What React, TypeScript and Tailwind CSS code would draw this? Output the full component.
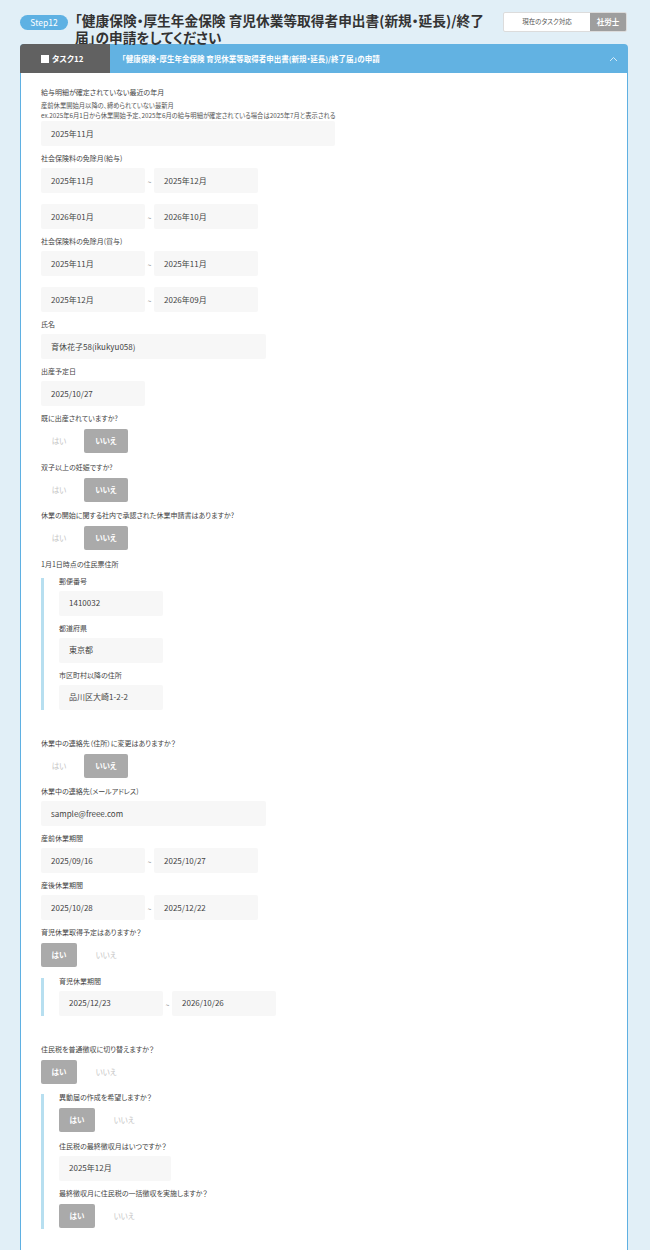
import React from "react";

type Opt = "yes" | "no";

function Label({ children }: { children: React.ReactNode }) {
  return <div className="text-[7px] leading-[10px] text-[#444] whitespace-nowrap">{children}</div>;
}

function Box({ value, w }: { value: string; w: string }) {
  return (
    <div className={`h-[25px] ${w} shrink-0 rounded-[2px] bg-[#f7f7f7] flex items-center pl-[10px] text-[8px] text-[#444]`}>
      {value}
    </div>
  );
}

function Range({ from, to }: { from: string; to: string }) {
  return (
    <div className="flex items-center">
      <Box value={from} w="w-[104px]" />
      <div className="w-[9px] text-center text-[7px] text-[#8a8a8a] pt-[4px]">~</div>
      <Box value={to} w="w-[104px]" />
    </div>
  );
}

function Toggle({ value }: { value: Opt }) {
  const on = "bg-[#aaaaaa] text-white font-bold";
  const off = "text-[#c4c4c4]";
  return (
    <div className="flex gap-[7px] mt-[1px] mb-[1.5px]">
      <div className={`w-[36px] h-[24px] rounded-[2px] flex items-center justify-center text-[7.5px] ${value === "yes" ? on : off}`}>はい</div>
      <div className={`w-[44px] h-[24px] rounded-[2px] flex items-center justify-center text-[7.5px] ${value === "no" ? on : off}`}>いいえ</div>
    </div>
  );
}

function Field({ label, children, className = "" }: { label: string; children: React.ReactNode; className?: string }) {
  return (
    <div className={`flex flex-col ${className}`}>
      <Label>{label}</Label>
      <div className="mt-[5px] flex flex-col gap-[11px]">{children}</div>
    </div>
  );
}

function Nested({ children, className = "" }: { children: React.ReactNode; className?: string }) {
  return (
    <div className={`flex flex-col gap-[7px] border-l-[3px] border-[#b7dff0] pl-[15px] ${className}`}>{children}</div>
  );
}

export default function App() {
  return (
    <div className="min-h-[1250px] bg-[#e1eff7] font-['Noto_Sans_CJK_JP','Noto_Sans',sans-serif] [font-feature-settings:'palt']">
      {/* page heading */}
      <div className="flex items-start h-[44px] pt-[12px] pl-[20px] pr-[23px]">
        <div className="mt-[3px] h-[15px] w-[48px] rounded-full bg-[#5eb1e3] text-white text-[8.5px] flex items-center justify-center shrink-0">
          Step12
        </div>
        <div className="ml-[7px] w-[420px] text-[13.7px] font-bold text-[#333]">
          <div className="leading-[17px]">「健康保険・厚生年金保険 育児休業等取得者申出書(新規・延長)/終了</div>
          <div className="leading-[17px]">届」の申請をしてください</div>
        </div>
        <div className="ml-auto h-[20px] w-[124px] flex rounded-[2px] border border-[#dcdcdc] bg-white overflow-hidden">
          <div className="flex-1 flex items-center justify-center text-[6.5px] text-[#555]">現在のタスク対応</div>
          <div className="w-[36px] bg-[#9e9e9e] flex items-center justify-center text-[7.5px] font-bold text-white">社労士</div>
        </div>
      </div>

      {/* task card */}
      <div className="ml-[20px] w-[608px]">
        <div className="flex h-[29px] rounded-t-[4px] overflow-hidden bg-[#62b2e2]">
          <div className="w-[90px] bg-[#616161] flex items-center pl-[21px] gap-[3px]">
            <div className="w-[8px] h-[8px] bg-white" />
            <span className="text-[8px] font-bold text-white">タスク12</span>
          </div>
          <div className="flex-1 flex items-center pl-[12px] text-[7.5px] font-bold text-white">
            「健康保険・厚生年金保険 育児休業等取得者申出書(新規・延長)/終了届」の申請
          </div>
          <div className="w-[30px] flex items-center justify-center">
            <svg width="9" height="6" viewBox="0 0 9 6" fill="none">
              <path d="M1 5L4.5 1.5L8 5" stroke="#d6ebf8" strokeWidth="1" />
            </svg>
          </div>
        </div>

        <div className="border-x border-[#5fb0e2] bg-white pt-[14px] pl-[20px] pb-[60px] flex flex-col gap-[7px]">
          <div className="flex flex-col">
            <Label>給与明細が確定されていない最近の年月</Label>
            <div className="mt-[4px] text-[6.3px] leading-[10px] text-[#555] whitespace-nowrap">
              <div>産前休業開始月以降の、締められていない最新月</div>
              <div>ex.2025年6月1日から休業開始予定、2025年6月の給与明細が確定されている場合は2025年7月と表示される</div>
            </div>
            <Box value="2025年11月" w="w-[294px]" />
          </div>

          <Field label="社会保険料の免除月(給与)">
            <Range from="2025年11月" to="2025年12月" />
            <Range from="2026年01月" to="2026年10月" />
          </Field>

          <Field label="社会保険料の免除月(賞与)">
            <Range from="2025年11月" to="2025年11月" />
            <Range from="2025年12月" to="2026年09月" />
          </Field>

          <Field label="氏名">
            <Box value="育休花子58(ikukyu058)" w="w-[225px]" />
          </Field>

          <Field label="出産予定日">
            <Box value="2025/10/27" w="w-[104px]" />
          </Field>

          <Field label="既に出産されていますか?">
            <Toggle value="no" />
          </Field>

          <Field label="双子以上の妊娠ですか?">
            <Toggle value="no" />
          </Field>

          <Field label="休業の開始に関する社内で承認された休業申請書はありますか?">
            <Toggle value="no" />
          </Field>

          <div className="flex flex-col mb-[21px]">
            <Label>1月1日時点の住民票住所</Label>
            <Nested className="mt-[9px]">
              <Field label="郵便番号" className="-mt-[2px]">
                <Box value="1410032" w="w-[104px]" />
              </Field>
              <Field label="都道府県">
                <Box value="東京都" w="w-[104px]" />
              </Field>
              <Field label="市区町村以降の住所">
                <Box value="品川区大崎1-2-2" w="w-[104px]" />
              </Field>
            </Nested>
          </div>

          <Field label="休業中の連絡先（住所）に変更はありますか？">
            <Toggle value="no" />
          </Field>

          <Field label="休業中の連絡先(メールアドレス)">
            <Box value="sample@freee.com" w="w-[225px]" />
          </Field>

          <Field label="産前休業期間">
            <Range from="2025/09/16" to="2025/10/27" />
          </Field>

          <Field label="産後休業期間">
            <Range from="2025/10/28" to="2025/12/22" />
          </Field>

          <div className="flex flex-col mb-[21px]">
            <Label>育児休業取得予定はありますか？</Label>
            <div className="mt-[5px]">
              <Toggle value="yes" />
            </div>
            <Nested className="mt-[9px]">
              <Field label="育児休業期間" className="-mt-[2px]">
                <Range from="2025/12/23" to="2026/10/26" />
              </Field>
            </Nested>
          </div>

          <div className="flex flex-col">
            <Label>住民税を普通徴収に切り替えますか？</Label>
            <div className="mt-[5px]">
              <Toggle value="yes" />
            </div>
            <Nested className="mt-[9px]">
              <Field label="異動届の作成を希望しますか？" className="-mt-[2px]">
                <Toggle value="yes" />
              </Field>
              <Field label="住民税の最終徴収月はいつですか？">
                <Box value="2025年12月" w="w-[112px]" />
              </Field>
              <Field label="最終徴収月に住民税の一括徴収を実施しますか？">
                <Toggle value="yes" />
              </Field>
            </Nested>
          </div>
        </div>
      </div>
    </div>
  );
}
